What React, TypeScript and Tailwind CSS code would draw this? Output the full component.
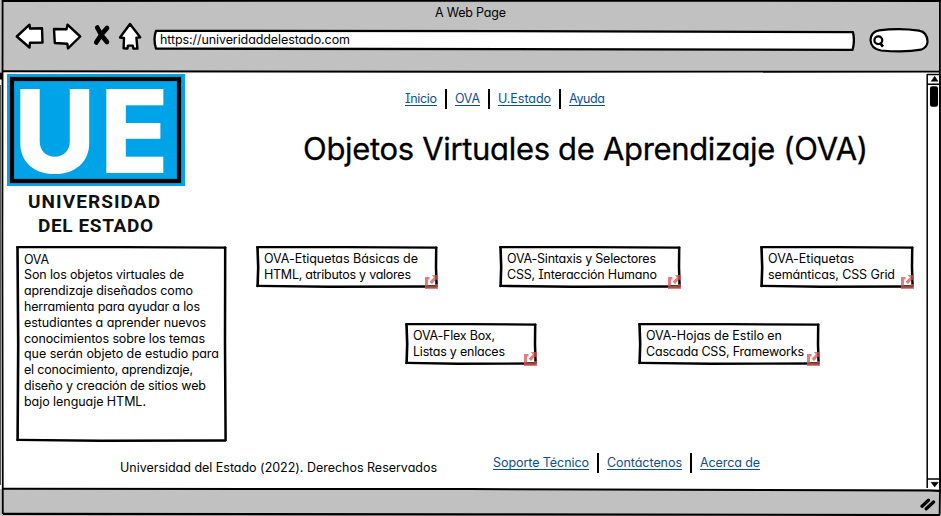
import { useLayoutEffect, useRef, type ReactNode } from "react";

/** One line of text whose tracking is tuned so that it fills the given width. */
function Line({ text, width, className = "" }: { text: string; width: number; className?: string }) {
  const ref = useRef<HTMLSpanElement>(null);
  useLayoutEffect(() => {
    const el = ref.current;
    if (!el) return;
    el.style.letterSpacing = "0px";
    const natural = el.getBoundingClientRect().width;
    el.style.letterSpacing = `${(width - natural) / (text.length - 1)}px`;
  }, [text, width]);
  return (
    <span className={`block whitespace-nowrap ${className}`} style={{ width }}>
      <span ref={ref} className="inline-block">
        {text}
      </span>
    </span>
  );
}

/** Slightly uneven hand-drawn rectangle with text on it. */
function SketchBox({ w, h, className = "", children }: { w: number; h: number; className?: string; children: ReactNode }) {
  return (
    <div className={`relative shrink-0 ${className}`}>
      <svg className="absolute inset-0" width={w} height={h} fill="none" stroke="#000" strokeLinecap="round">
        <path d={`M1.3 1.2 L${w * 0.5} 1.2 L${w - 1.6} 1.6`} strokeWidth="2.3" />
        <path d={`M1.5 1.4 L2.2 ${h * 0.5} L1.6 ${h - 2}`} strokeWidth="2.6" />
        <path d={`M${w - 1.8} 1.8 L${w - 2} ${h * 0.5} L${w - 1.4} ${h - 2}`} strokeWidth="2.5" />
        <path d={`M1.5 ${h - 2.1} L${w * 0.4} ${h - 1.2} L${w - 1.8} ${h - 1.5}`} strokeWidth="2.4" />
      </svg>
      <div className="relative pl-[8px] pt-[5px]">{children}</div>
    </div>
  );
}

function LinkBadge() {
  return (
    <svg className="absolute -bottom-px right-0 opacity-75" width="13" height="14" viewBox="0 0 13 14">
      <path d="M0 2H4.5V4.5H3V11H10V9H13V14H0Z" fill="#d9534f" />
      <path d="M7 0H13V6L11 4.6L7 9L4.6 6.8L8.8 2.4Z" fill="#d9534f" />
    </svg>
  );
}

function Card({ w, className, lines }: { w: number; className: string; lines: [string, number][] }) {
  return (
    <SketchBox w={w} h={42} className={`h-[42px] ${className}`}>
      {lines.map(([t, lw]) => (
        <Line key={t} text={t} width={lw} />
      ))}
      <div className="absolute right-0 top-0 h-[42px]">
        <LinkBadge />
      </div>
    </SketchBox>
  );
}

function LinkBar({ links, className }: { links: [string, number][]; className: string }) {
  return (
    <nav className={`flex h-[20px] items-center text-[#0c4f94] ${className}`}>
      {links.map(([t, w], i) => (
        <div key={t} className="flex h-[20px] items-center">
          {i > 0 && <span className="mx-[8px] h-[20px] w-[2px] bg-black" />}
          <a className="mb-[2px] h-[15px] border-b border-[#0c4f94] leading-[15px]">
            <Line text={t} width={w} />
          </a>
        </div>
      ))}
    </nav>
  );
}

function Logo() {
  return (
    <svg width="178" height="112" viewBox="0 0 178 112" className="block overflow-visible">
      <rect width="178" height="112" fill="#00a2e8" />
      <rect x="5" y="5" width="167" height="102" fill="none" stroke="#000" strokeWidth="4.2" />
      <g fill="#fff" fontFamily="Inter, sans-serif" fontWeight="800" fontSize="115">
        <text transform="translate(7 98.6) scale(0.975 1)">U</text>
        <text transform="translate(93 98.6) scale(0.98 1)">E</text>
      </g>
    </svg>
  );
}

const intro: [string, number][] = [
  ["OVA", 25],
  ["Son los objetos virtuales de", 160],
  ["aprendizaje diseñados como", 169],
  ["herramienta para ayudar a los", 176],
  ["estudiantes a aprender nuevos", 182],
  ["conocimientos sobre los temas", 181],
  ["que serán objeto de estudio para", 195],
  ["el conocimiento, aprendizaje,", 169],
  ["diseño y creación de sitios web", 182],
  ["bajo lenguaje HTML.", 122],
];

export default function App() {
  return (
    <div className="relative flex h-[516px] w-[941px] flex-col overflow-hidden bg-white pl-[3px] font-['Inter','Noto_Sans',sans-serif] text-[12.5px] leading-[15.7px] text-black [font-feature-settings:'cv11','cv08']">
      <header className="-ml-[3px] h-[72px] shrink-0 bg-[#c1c1c1] pt-[5px]">
        <div className="flex justify-center">
          <Line text="A Web Page" width={71} />
        </div>
        <div className="flex h-[30px] items-start pl-[15px]">
          <svg width="128" height="30" className="mt-[1px] shrink-0" fill="#fff" stroke="#000" strokeWidth="2.4" strokeLinejoin="round" strokeLinecap="round">
            <path d="M1.8 14.5L14.5 2.7L15 6.5L27 6.3L27.5 20.5L15 20.8L14.5 25.5Z" />
            <path d="M39 7L51.5 7.2L52.5 2.7L65.2 14.5L53 26.3L52.3 21.8L39.8 21Z" />
            <path d="M82.2 5.5Q86 14 92 20M92 6Q86 12 81.2 20.5" strokeWidth="4.6" fill="none" />
            <path d="M115 2L125.2 15.2L121.4 15.7L122.4 26.6L118.4 26.6L117.8 23.6L113 23.6L112.4 26.6L108.6 26.2L109 16L105 15.5Z" />
          </svg>
          <div className="relative ml-[10px] mt-[8px] h-[22px] w-[702px] shrink-0">
            <svg className="absolute inset-0" width="702" height="22" fill="#fff" stroke="#000" strokeWidth="2.3" strokeLinejoin="round">
              <path d="M3 1.8L350 2.2L700 3.2Q702 12 699.6 20.8L350 20.2L3 19.6Q0 10 3 1.8Z" />
            </svg>
            <div className="relative pl-[7px] pt-[3px]">
              <Line text="https://univeridaddelestado.com" width={190} />
            </div>
          </div>
          <svg width="60" height="27" className="ml-[14px] mt-[6px] shrink-0" fill="#fff" stroke="#000" strokeWidth="2.2">
            <path d="M10 3.4Q30 0.7 50 3.6Q58 5 58.5 14Q58.8 20 52 22.7Q36 25.7 12 23.5Q2 22 1.5 13Q2 5 10 3.4Z" />
            <circle cx="9.3" cy="13.2" r="3.9" strokeWidth="2.3" />
            <path d="M11.3 16.4L14 19.6" strokeWidth="2.8" />
          </svg>
        </div>
      </header>

      <div className="flex h-[417px] shrink-0">
        <div className="flex w-[923px] shrink-0 flex-col">
          <div className="flex h-[370px]">
            <aside className="w-[230px] shrink-0 pl-[4px] pt-[2px]">
              <Logo />
              <div className="flex flex-col pt-[4px] font-['Roboto',sans-serif] text-[19px] font-bold leading-[24px] text-[#111]">
                <Line text="UNIVERSIDAD" width={132} className="ml-[21px]" />
                <Line text="DEL ESTADO" width={115} className="ml-[31px]" />
              </div>
              <SketchBox w={211} h={196} className="ml-[9px] mt-[8px] h-[196px] w-[211px] leading-[15.78px]">
                <div className="pt-[0.6px]">
                  {intro.map(([t, w]) => (
                    <Line key={t} text={t} width={w} />
                  ))}
                </div>
              </SketchBox>
            </aside>
            <main className="flex flex-1 flex-col">
              <LinkBar className="ml-[172px] mt-[17px]" links={[["Inicio", 32], ["OVA", 25], ["U.Estado", 53], ["Ayuda", 36]]} />
              <h1 className="ml-[70px] mt-[20px] h-[40px] text-[31px] leading-[40px] [-webkit-text-stroke:0.3px_#000]">
                <Line text="Objetos Virtuales de Aprendizaje (OVA)" width={565} />
              </h1>
              <section className="mt-[77px] flex pl-[23px]">
                <Card w={182} className="w-[182px]" lines={[["OVA-Etiquetas Básicas de", 154], ["HTML, atributos y valores", 147]]} />
                <Card w={182} className="ml-[61px] w-[182px]" lines={[["OVA-Sintaxis y Selectores", 149], ["CSS, Interacción Humano", 150]]} />
                <Card w={154} className="ml-[79px] w-[154px]" lines={[["OVA-Etiquetas", 86], ["semánticas, CSS Grid", 127]]} />
              </section>
              <section className="mt-[35px] flex pl-[172px]">
                <Card w={132} className="w-[132px]" lines={[["OVA-Flex Box,", 82], ["Listas y enlaces", 92]]} />
                <Card w={182} className="ml-[101px] w-[182px]" lines={[["OVA-Hojas de Estilo en", 136], ["Cascada CSS, Frameworks", 158]]} />
              </section>
            </main>
          </div>
          <footer className="flex items-start pl-[117px] pt-[11px]">
            <div className="mt-[7px]">
              <Line text="Universidad del Estado (2022). Derechos Reservados" width={317} />
            </div>
            <LinkBar className="ml-[56px]" links={[["Soporte Técnico", 96], ["Contáctenos", 75], ["Acerca de", 60]]} />
          </footer>
        </div>
        <svg width="15" height="417" className="shrink-0" stroke="#000" strokeWidth="1.5" fill="none">
          <path d="M1.2 2V416M1 2.5H14M1 12.2H14M1 407H14M13.9 2V416" />
          <path d="M8.7 4.3L12 9.2H5.2Z" fill="#000" strokeWidth="0.5" />
          <path d="M8.7 415L5 410.3H12.4Z" fill="#000" strokeWidth="0.5" />
          <rect x="4.7" y="15" width="6.6" height="19" rx="1.5" fill="#000" />
        </svg>
      </div>

      <div className="-ml-[3px] flex h-[27px] justify-end bg-[#c1c1c1] pr-[4px] pt-[8px]">
        <svg width="18" height="16" stroke="#000" strokeWidth="3.2" strokeLinecap="round">
          <path d="M3 9.2L9.5 3.2M7.2 11.8L14.6 5" />
        </svg>
      </div>

      <svg className="pointer-events-none absolute inset-0" width="941" height="516" fill="none" stroke="#000">
        <path d="M2 1L470 0.8L941 1" strokeWidth="1.9" />
        <path d="M2.6 0L2.4 250L2.8 514" strokeWidth="1.8" />
        <path d="M0.5 85V485" stroke="#555" strokeWidth="1" />
        <path d="M0 76H2" strokeWidth="7" />
        <path d="M939.9 0V73L940 489L939.6 515" strokeWidth="1.8" />
        <path d="M3 71.2L470 71.8L940 71.6" strokeWidth="1.9" />
        <path d="M3 488.8L470 489L930 490.6L940 491" strokeWidth="2" />
        <path d="M3 513.8L470 514.3L940 515" strokeWidth="2.2" />
      </svg>
    </div>
  );
}
